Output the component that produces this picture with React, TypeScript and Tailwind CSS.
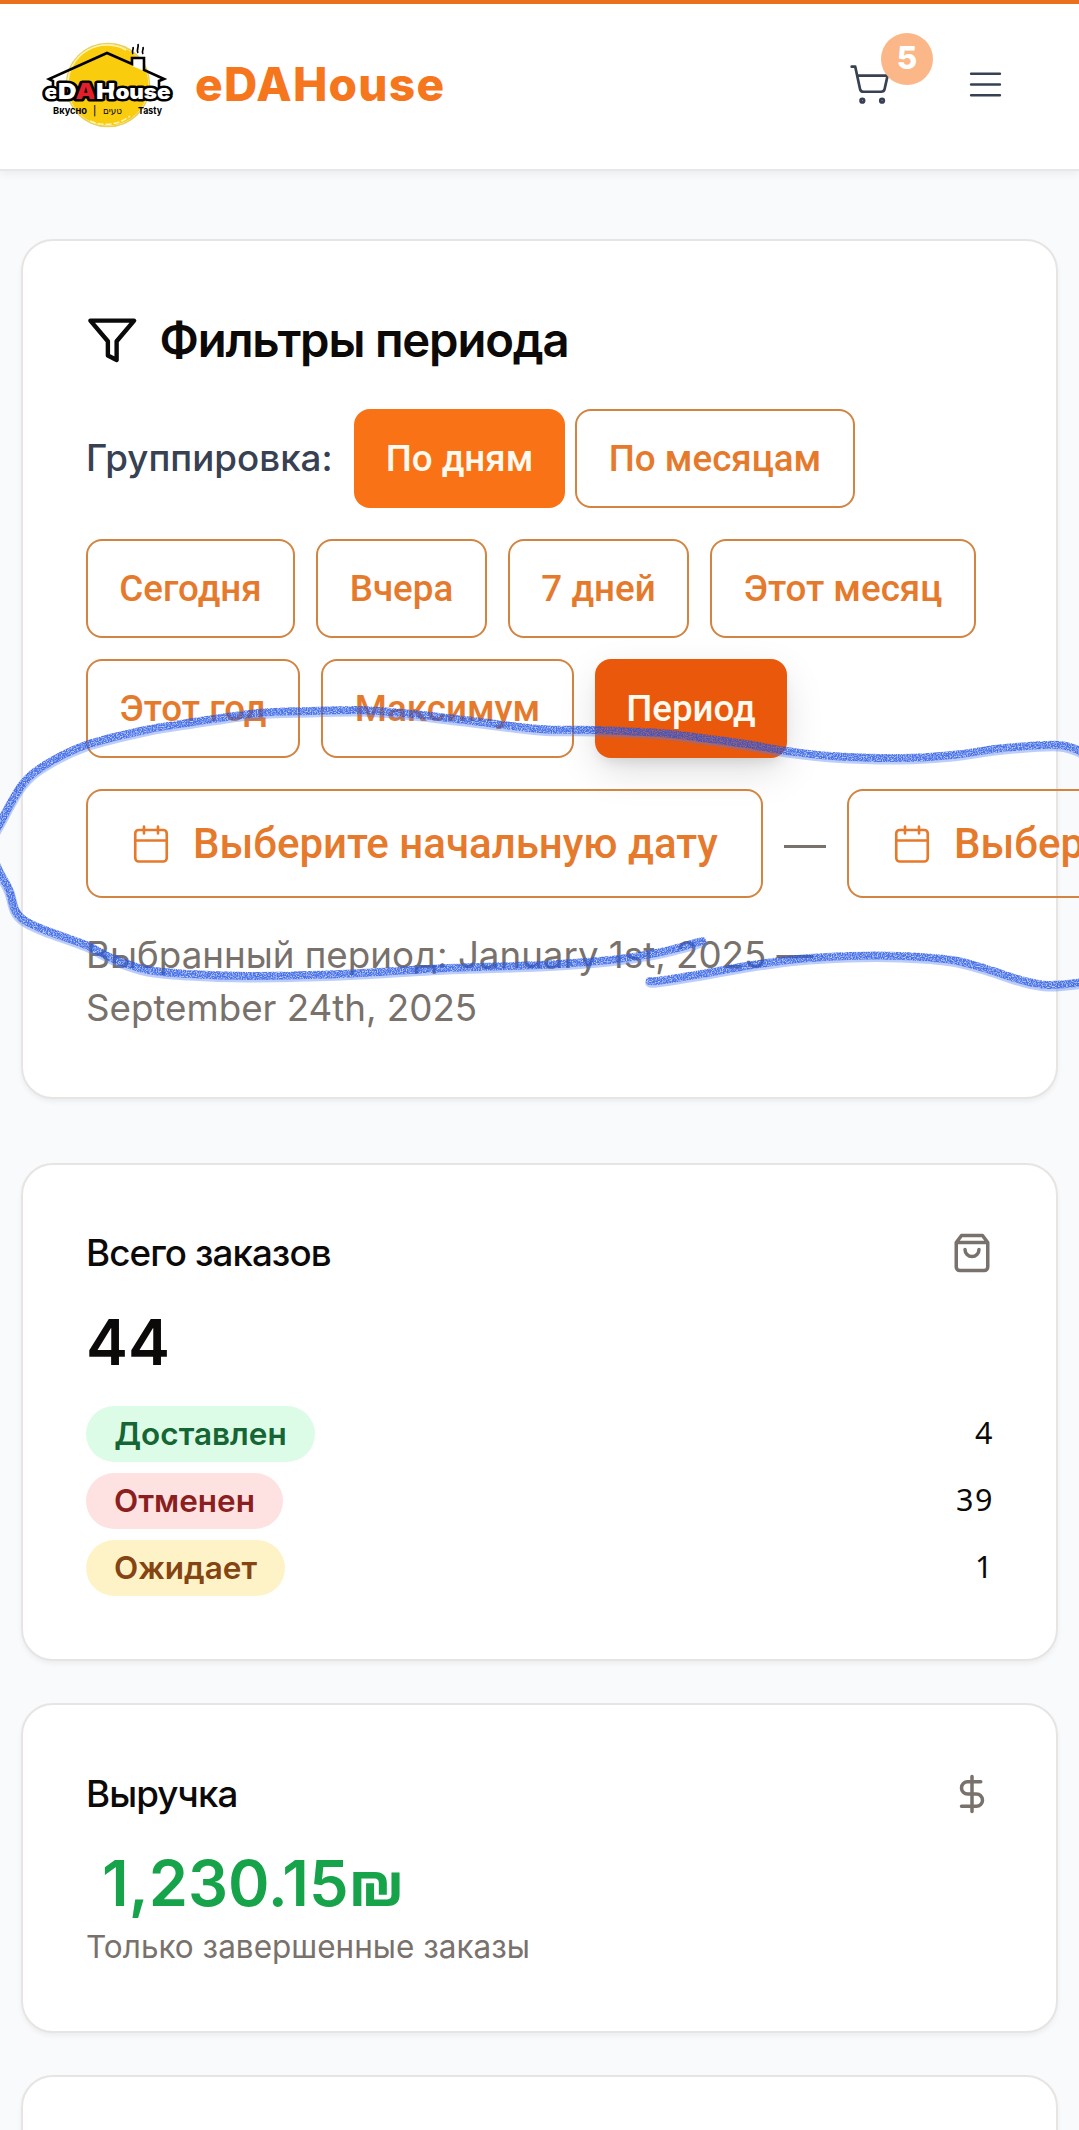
import React from "react";

type Pt = [number, number];

function smooth(points: Pt[]): string {
  let d = `M${points[0][0]} ${points[0][1]}`;
  for (let i = 0; i < points.length - 1; i++) {
    const p0 = points[Math.max(0, i - 1)];
    const p1 = points[i];
    const p2 = points[i + 1];
    const p3 = points[Math.min(points.length - 1, i + 2)];
    d += ` C${p1[0] + (p2[0] - p0[0]) / 6} ${p1[1] + (p2[1] - p0[1]) / 6} ${p2[0] - (p3[0] - p1[0]) / 6} ${p2[1] - (p3[1] - p1[1]) / 6} ${p2[0]} ${p2[1]}`;
  }
  return d;
}

const strokes: string[] = [
  smooth([[-8, 838], [0, 823], [22, 785], [45, 765], [86, 745], [145, 730], [193, 722], [258, 713], [310, 711], [361, 710], [413, 714], [465, 720], [540, 729], [595, 730], [660, 733], [695, 737], [746, 744], [787, 751], [832, 756], [901, 758], [952, 755], [1004, 748], [1059, 745], [1085, 753]]),
  smooth([[-6, 860], [0, 873], [9, 890], [15, 910], [24, 920], [45, 930], [86, 945], [114, 959], [148, 970], [189, 974], [248, 976], [310, 975], [361, 973], [448, 968], [540, 965], [609, 960], [650, 954], [677, 948], [702, 941]]),
  smooth([[650, 981], [657, 981], [695, 975], [746, 966], [798, 959], [849, 956], [901, 956], [952, 960], [987, 969], [1021, 980], [1049, 985], [1085, 982]]),
];

function Scribble() {
  return (
    <svg className="pointer-events-none absolute left-0 top-0" width="1079" height="2130" viewBox="0 0 1079 2130" fill="none">
      <defs>
        <filter id="grain" filterUnits="userSpaceOnUse" x="0" y="690" width="1079" height="320">
          <feTurbulence type="fractalNoise" baseFrequency="0.8" numOctaves="2" seed="4" result="n" />
          <feColorMatrix in="n" type="matrix" values="0 0 0 0 0  0 0 0 0 0  0 0 0 0 0  3 0 0 0 -0.8" result="a" />
          <feComposite in="SourceGraphic" in2="a" operator="in" />
        </filter>
      </defs>
      <g strokeLinecap="round" strokeLinejoin="round">
        {strokes.map((d, i) => (
          <g key={i}>
            <path d={d} stroke="#4f7bf0" strokeOpacity="0.38" strokeWidth="10" transform="translate(0 1.5)" />
            <path d={d} stroke="#1f4fe0" strokeOpacity="0.72" strokeWidth="8" filter="url(#grain)" />
          </g>
        ))}
      </g>
    </svg>
  );
}

function Logo() {
  return (
    <svg className="-mt-[2px] shrink-0" width="136" height="92" viewBox="40 40 136 92">
      <circle cx="108" cy="85" r="40.5" fill="#f9cd0e" />
      <circle cx="108" cy="85" r="41.5" fill="none" stroke="#e8cf5a" strokeWidth="1.6" />
      <path d="M68 83a39 39 0 0 1 58-33" fill="none" stroke="#fff3b0" strokeWidth="1.5" />
      <path d="M90 121a39 39 0 0 0 40-5" fill="none" stroke="#fff3b0" strokeWidth="1.5" strokeDasharray="6 2" />
      <path d="M132 57h12v14l-12-5z" fill="#fff" />
      <path d="M53 90V81l-4-2 58-26 25 11V58h12v12l20 9-5 2v9" fill="none" stroke="#000" strokeWidth="2.6" strokeLinejoin="miter" />
      <path d="M133 54c-2-3 1-4 0-7M138 53c-2-3 1-5 0-9M143 54c-2-3 1-4 0-7" fill="none" stroke="#000" strokeWidth="1.7" />
      <g fontFamily="Inter, sans-serif" fontWeight="900" fontSize="22" paintOrder="stroke" stroke="#000" strokeWidth="5" strokeLinejoin="round" fill="#fff">
        <text x="44.5" y="99" textLength="126" lengthAdjust="spacingAndGlyphs">
          <tspan fontSize="19">e</tspan>D<tspan fill="#e21f2b">A</tspan>H<tspan fontSize="19">ouse</tspan>
        </text>
      </g>
      <g fontFamily="Inter, sans-serif" fontWeight="700" fontSize="9.5" fill="#000">
        <text x="53" y="114" textLength="34" lengthAdjust="spacingAndGlyphs">Вкусно</text>
        <text x="93" y="114" fontWeight="500">|</text>
        <text x="103" y="114" fontFamily="'DejaVu Sans', sans-serif" fontWeight="400" textLength="19" lengthAdjust="spacingAndGlyphs">טעים</text>
        <text x="138" y="114" textLength="24" lengthAdjust="spacingAndGlyphs">Tasty</text>
      </g>
    </svg>
  );
}

type IconProps = { size: number; sw: number; className?: string; children: React.ReactNode };
function Icon({ size, sw, className, children }: IconProps) {
  return (
    <svg className={"shrink-0 " + (className ?? "")} width={size} height={size} viewBox="0 0 24 24" fill="none" stroke="currentColor" strokeWidth={sw} strokeLinecap="round" strokeLinejoin="round">
      {children}
    </svg>
  );
}

function CalendarIcon() {
  return (
    <Icon size={42} sw={1.5}>
      <path d="M8 2v4M16 2v4M3 10h18" />
      <rect x="3" y="4" width="18" height="18" rx="2" />
    </Icon>
  );
}

const btn = "flex h-[99px] shrink-0 items-center justify-center rounded-[16px] pt-[2px] font-[Roboto,sans-serif] text-[36.75px] leading-none font-medium whitespace-nowrap";
const outline = "border-2 border-[#d28440] text-[#e67a2c]";
const card = "rounded-[32px] border-2 border-[#e7e5e4] bg-white px-[63px] shadow-[0_3px_5px_rgba(0,0,0,0.05)]";

function OutlineButton({ label, width }: { label: string; width: string }) {
  return <button className={`${btn} ${outline} bg-white ${width}`}>{label}</button>;
}

function DateButton({ label }: { label: string }) {
  return (
    <button className={`flex h-[109px] w-[677px] shrink-0 items-center gap-[21px] rounded-[16px] pl-[42px] ${outline} font-[Roboto,sans-serif] text-[42px] leading-none font-medium whitespace-nowrap`}>
      <CalendarIcon />
      {label}
    </button>
  );
}

function StatusRow({ label, count, tone, width }: { label: string; count: number; tone: string; width: string }) {
  return (
    <div className="flex items-center justify-between">
      <span className={`flex h-14 items-center justify-center rounded-full pb-px text-[31.5px] leading-none font-semibold ${tone} ${width}`}>{label}</span>
      <span className="mt-[-3px] mr-[-1px] font-['Noto_Sans',sans-serif] text-[30.5px] leading-none tracking-[1.5px]">{count}</span>
    </div>
  );
}

export default function App() {
  return (
    <div className="relative h-[2130px] w-[1079px] overflow-hidden bg-[#f9fafb] font-[Inter,sans-serif] text-[#0c0a09]">
      <header className="flex h-[171px] items-center border-t-4 border-b-2 border-t-[#e8701f] border-b-[#e5e7eb] bg-white pl-10 shadow-[0_3px_8px_rgba(0,0,0,0.06)]">
        <Logo />
        <span className="mt-[-5px] ml-[19px] text-[46px] leading-none font-extrabold tracking-[1.25px] text-[#f5761c]">eDAHouse</span>
        <div className="relative mt-[-4px] mr-[72px] ml-auto flex w-[159px] items-center justify-between text-[#374151]">
          <Icon size={43} sw={1.5}>
            <circle cx="8" cy="21" r="1" />
            <circle cx="19" cy="21" r="1" />
            <path d="M2.05 2.05h2l2.66 12.42a2 2 0 0 0 2 1.58h9.78a2 2 0 0 0 1.95-1.57l1.65-7.43H5.12" />
          </Icon>
          <Icon size={43} sw={1.5}>
            <path d="M4 6h16M4 12h16M4 18h16" />
          </Icon>
          <span className="absolute -top-[30px] left-[33px] flex size-[52px] items-center justify-center rounded-full bg-[#fbb787] pb-[2px] text-[31.5px] leading-none font-extrabold text-white">5</span>
        </div>
      </header>

      <main className="px-[21px] pt-[68px]">
        <section className={`${card} mb-16 h-[860px] pt-[73px]`}>
          <h2 className="flex h-[52px] items-center gap-[21px] text-[47.25px] leading-none font-semibold tracking-[-1.18px] whitespace-nowrap">
            <Icon size={52.5} sw={2}>
              <path d="M22 3H2l8 9.46V19l4 2v-8.54L22 3z" />
            </Icon>
            Фильтры периода
          </h2>
          <div className="mt-[43px] flex items-center">
            <span className="w-[268px] text-[36.75px] leading-none font-medium whitespace-nowrap text-[#374151]">Группировка:</span>
            <button className={`${btn} mr-[10px] w-[211px] bg-[#f97316] text-[#fffaf0]`}>По дням</button>
            <OutlineButton label="По месяцам" width="w-[280px]" />
          </div>
          <div className="mt-[31px] flex gap-[21px]">
            <OutlineButton label="Сегодня" width="w-[209px]" />
            <OutlineButton label="Вчера" width="w-[171px]" />
            <OutlineButton label="7 дней" width="w-[181px]" />
            <OutlineButton label="Этот месяц" width="w-[266px]" />
          </div>
          <div className="mt-[21px] flex gap-[21px]">
            <OutlineButton label="Этот год" width="w-[214px]" />
            <OutlineButton label="Максимум" width="w-[253px]" />
            <button className={`${btn} w-[192px] bg-[#ea580c] text-[#fffaf0] shadow-[0_14px_40px_-4px_rgba(0,0,0,0.15),0_8px_14px_-6px_rgba(0,0,0,0.12)]`}>Период</button>
          </div>
          <div className="mt-[31px] flex items-center gap-[21px]">
            <DateButton label="Выберите начальную дату" />
            <span className="mt-[5px] h-[3px] w-[42px] shrink-0 bg-[#78716c]" />
            <DateButton label="Выберите конечную дату" />
          </div>
          <p className="mt-[31px] text-[36.75px] leading-[52.5px] tracking-[-0.02px] text-[#78716c]">
            Выбранный период: January 1st, 2025 —<br />
            September 24th, 2025
          </p>
        </section>

        <section className={`${card} mb-[42px] h-[498px] pt-[63px]`}>
          <div className="flex h-[50px] items-center justify-between">
            <h3 className="text-[36.75px] leading-none font-medium tracking-[-0.92px]">Всего заказов</h3>
            <Icon size={42} sw={2} className="text-[#78716c]">
              <path d="M6 2 3 6v14a2 2 0 0 0 2 2h14a2 2 0 0 0 2-2V6l-3-4ZM3 6h18M16 10a4 4 0 0 1-8 0" />
            </Icon>
          </div>
          <div className="mt-[22px] text-[63px] leading-[84px] font-semibold">44</div>
          <div className="mt-[22px] flex flex-col gap-[11px]">
            <StatusRow label="Доставлен" count={4} tone="bg-[#dcfce7] text-[#166534]" width="w-[229px]" />
            <StatusRow label="Отменен" count={39} tone="bg-[#fee2e2] text-[#8b1f1f]" width="w-[197px]" />
            <StatusRow label="Ожидает" count={1} tone="bg-[#fef3c7] text-[#854512]" width="w-[199px]" />
          </div>
        </section>

        <section className={`${card} mb-[42px] h-[330px] pt-[63px]`}>
          <div className="flex h-[52px] items-center justify-between">
            <h3 className="text-[36.75px] leading-none font-medium tracking-[-0.92px]">Выручка</h3>
            <Icon size={42} sw={2} className="text-[#78716c]">
              <path d="M12 2v20M17 5H9.5a3.5 3.5 0 0 0 0 7h5a3.5 3.5 0 0 1 0 7H6" />
            </Icon>
          </div>
          <div className="mt-[21px] pl-4 text-[63px] leading-[84px] font-semibold whitespace-nowrap text-[#16a34a]">1,230.15₪</div>
          <p className="pt-px text-[31.5px] leading-[42px] text-[#78716c]">Только завершенные заказы</p>
        </section>

        <section className={`${card} h-[400px]`} />
      </main>
      <Scribble />
    </div>
  );
}
